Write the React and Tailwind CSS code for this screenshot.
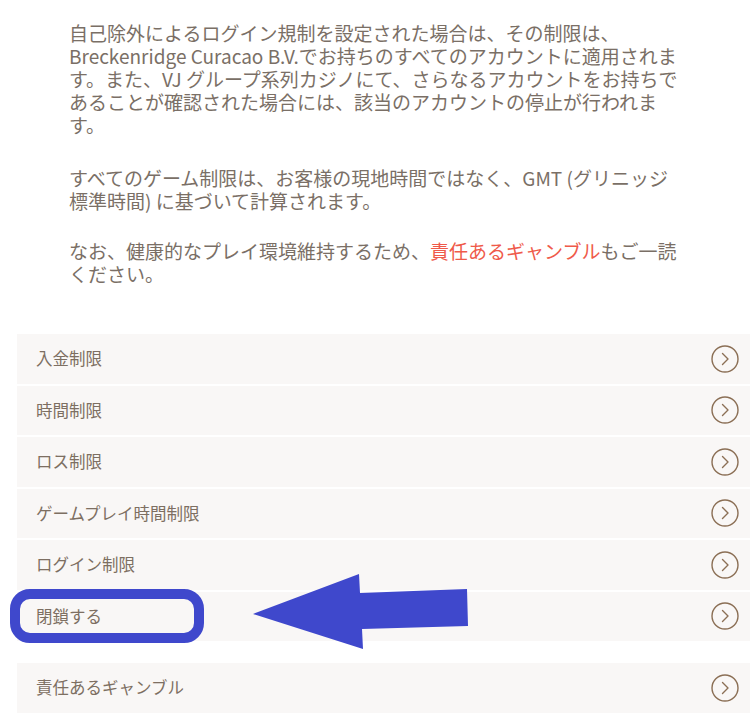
import React from 'react';

const FONT = { fontFamily: '"Noto Sans CJK JP", "Noto Sans", sans-serif' };

const paragraphs = [
  [
    '自己除外によるログイン規制を設定された場合は、その制限は、',
    'Breckenridge Curacao B.V.でお持ちのすべてのアカウントに適用されま',
    'す。また、VJ グループ系列カジノにて、さらなるアカウントをお持ちで',
    'あることが確認された場合には、該当のアカウントの停止が行われま',
    'す。',
  ],
  [
    'すべてのゲーム制限は、お客様の現地時間ではなく、GMT (グリニッジ',
    '標準時間) に基づいて計算されます。',
  ],
];

const limits = ['入金制限', '時間制限', 'ロス制限', 'ゲームプレイ時間制限', 'ログイン制限', '閉鎖する'];

const ChevronCircle = () => (
  <svg width="28" height="28" viewBox="0 0 28 28" fill="none">
    <circle cx="14" cy="14" r="13" stroke="#8b6f55" strokeWidth="1.4" />
    <path d="M11.5 8.5 L17 14 L11.5 19.5" stroke="#8b6f55" strokeWidth="1.4" strokeLinecap="round" strokeLinejoin="round" />
  </svg>
);

const Row = ({ label }) => (
  <div className="flex items-center justify-between h-[49.5px] bg-[#f9f7f6] pl-[19px] pr-[11px]">
    <span className="text-[16.5px] text-[#7d6f62]">{label}</span>
    <ChevronCircle />
  </div>
);

export default function App() {
  return (
    <div className="relative w-[756px] h-[717px] overflow-hidden bg-white" style={FONT}>
      {/* intro text */}
      <div className="pt-[21px] pl-[69px] text-[19px] leading-[23px] text-[#7a6f66]">
        <p className="mb-[30px]">
          {paragraphs[0].map((l) => (
            <span key={l} className="block whitespace-nowrap">{l}</span>
          ))}
        </p>
        <p className="mb-[27px]">
          {paragraphs[1].map((l) => (
            <span key={l} className="block whitespace-nowrap">{l}</span>
          ))}
        </p>
        <p>
          <span className="block whitespace-nowrap">
            なお、健康的なプレイ環境維持するため、<span className="text-[#ef5a4a]">責任あるギャンブル</span>もご一読
          </span>
          <span className="block whitespace-nowrap">ください。</span>
        </p>
      </div>

      {/* limit list */}
      <div className="ml-[17px] w-[733px] mt-[49px]">
        <div className="flex flex-col gap-[2px]">
          {limits.map((l) => (
            <Row key={l} label={l} />
          ))}
        </div>
        <div className="mt-[22px]">
          <Row label="責任あるギャンブル" />
        </div>
      </div>

      {/* annotation */}
      <div className="absolute left-[10px] top-[589px] w-[194px] h-[54px] border-[10px] border-[#3f48cc] rounded-[20px]" />
      <svg className="absolute left-0 top-0" width="756" height="717" viewBox="0 0 756 717">
        <polygon
          points="253,614 359,574 360,593 467,589 468,626 362,629 363,649"
          fill="#3f48cc"
        />
      </svg>
    </div>
  );
}
